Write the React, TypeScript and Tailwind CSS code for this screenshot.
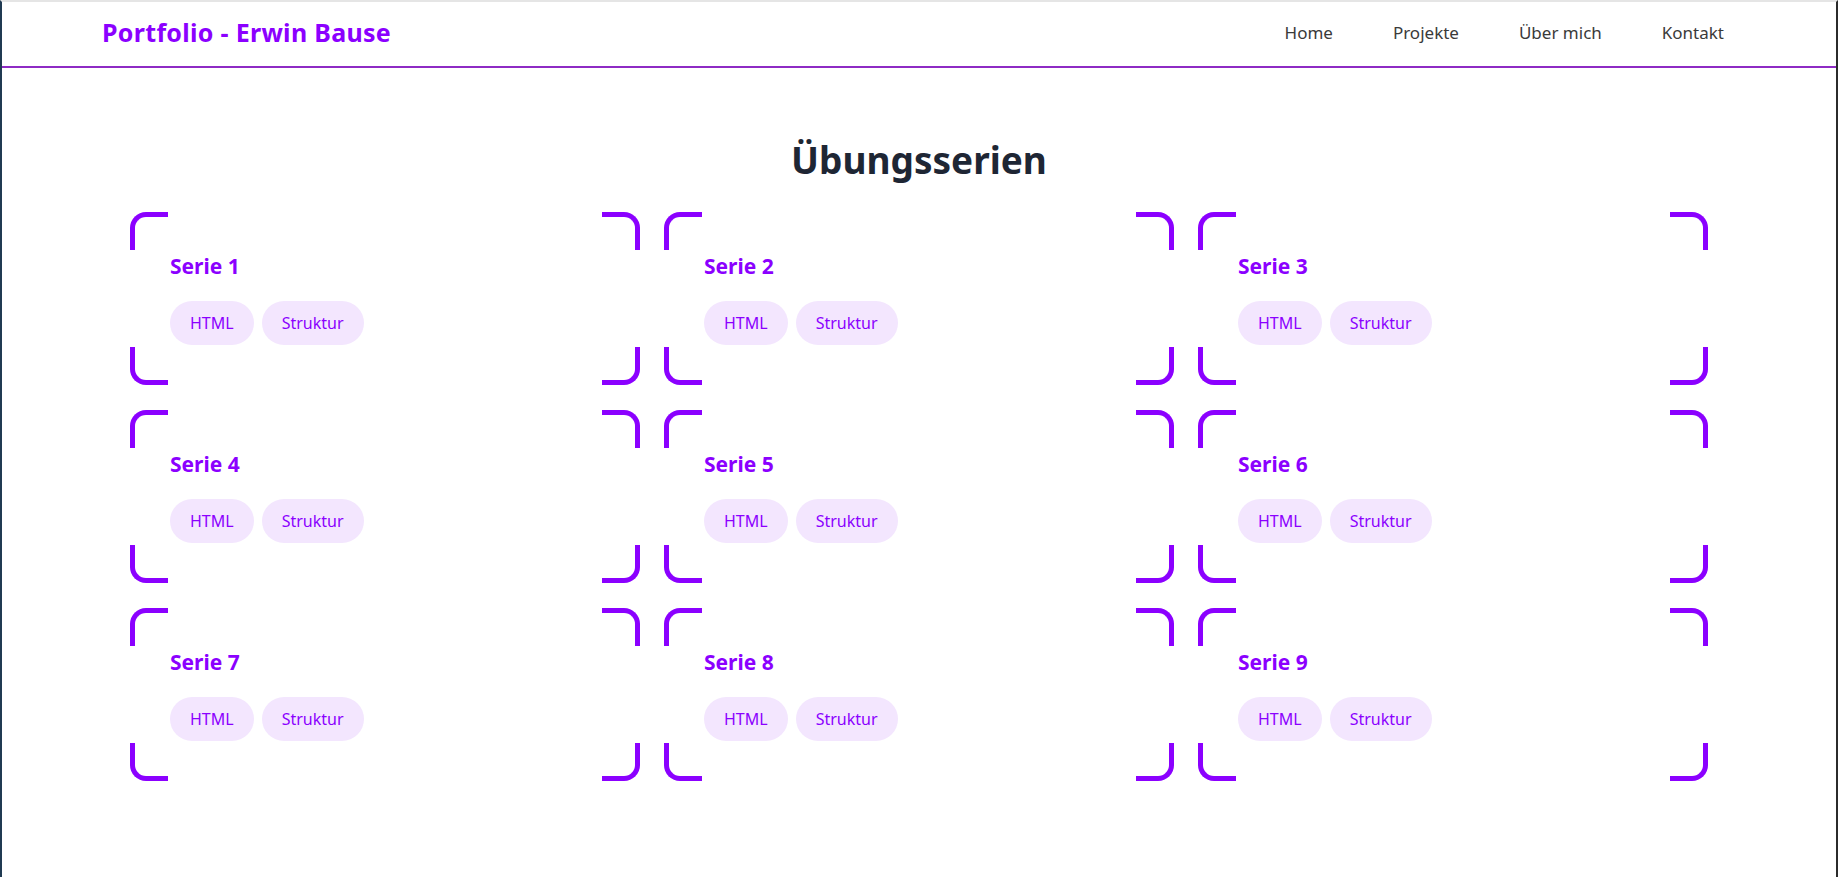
import React from "react";

const FONT = { fontFamily: '"Noto Sans", "Open Sans", sans-serif' };

function Corner({ pos }: { pos: "tl" | "tr" | "bl" | "br" }) {
  const cls =
    pos === "tl"
      ? "top-0 left-0 border-t-[5px] border-l-[5px] rounded-tl-[16px]"
      : pos === "tr"
      ? "top-0 right-0 border-t-[5px] border-r-[5px] rounded-tr-[16px]"
      : pos === "bl"
      ? "bottom-0 left-0 border-b-[5px] border-l-[5px] rounded-bl-[16px]"
      : "bottom-0 right-0 border-b-[5px] border-r-[5px] rounded-br-[16px]";
  return <span className={`absolute w-[38px] h-[38px] border-[#8b00ff] ${cls}`} />;
}

function Card({ n }: { n: number }) {
  return (
    <div className="relative h-[173px] px-10 pt-10">
      <Corner pos="tl" />
      <Corner pos="tr" />
      <Corner pos="bl" />
      <Corner pos="br" />
      <h3 className="text-[21px] leading-[29px] font-bold text-[#8b00ff]">Serie {n}</h3>
      <div className="mt-[20px] flex gap-2">
        {["HTML", "Struktur"].map((t) => (
          <span
            key={t}
            className="h-[44px] px-5 flex items-center rounded-full bg-[#f3e6fe] text-[#8b00ff] text-[16px]"
          >
            {t}
          </span>
        ))}
      </div>
    </div>
  );
}

export default function App() {
  return (
    <div
      style={FONT}
      className="min-h-[877px] bg-white border-l-2 border-l-[#203a52] border-r-2 border-r-[#2b2b2b] border-t-2 border-t-[#e5e5e5]"
    >
      <header className="h-[66px] flex items-center justify-between pl-[100px] pr-[112px] pb-[3px] border-b-2 border-[#8e2bc4]">
        <span className="text-[25px] tracking-[0.3px] font-bold text-[#8b00ff]">Portfolio - Erwin Bause</span>
        <nav className="flex gap-[60px] text-[17px] text-[#3a3a3a]">
          <a>Home</a>
          <a>Projekte</a>
          <a>Über mich</a>
          <a>Kontakt</a>
        </nav>
      </header>
      <main className="pt-[72px]">
        <h1 className="text-center text-[37px] leading-[40px] font-bold text-[#1e2634]">Übungsserien</h1>
        <div className="mt-8 mx-auto w-[1578px] grid grid-cols-3 gap-x-6 gap-y-[25px]">
          {Array.from({ length: 9 }, (_, i) => (
            <Card key={i} n={i + 1} />
          ))}
        </div>
      </main>
    </div>
  );
}
